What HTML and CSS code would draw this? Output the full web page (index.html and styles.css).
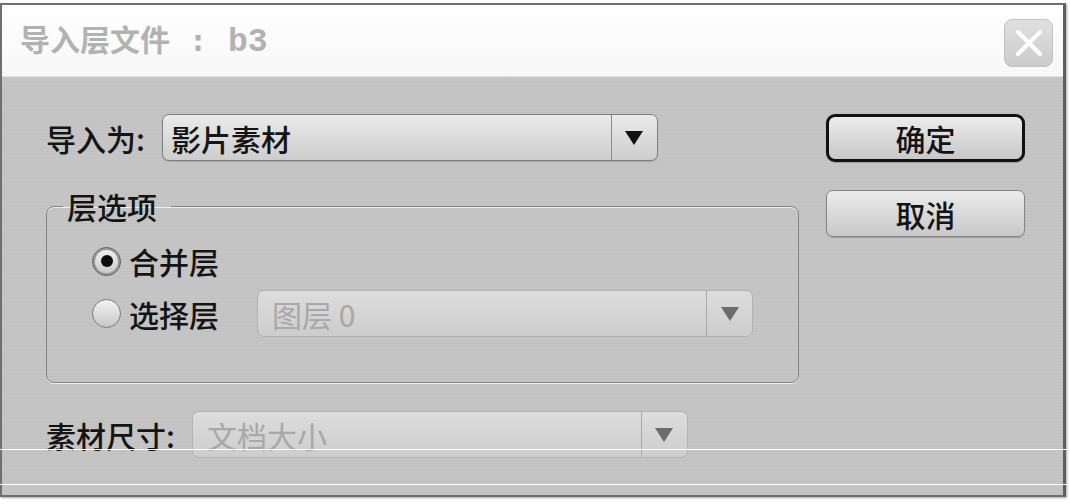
FILE: index.html
```html
<!DOCTYPE html>
<html lang="zh-CN">
<head>
  <meta charset="UTF-8" />
  <title>导入层文件</title>
  <link rel="stylesheet" href="styles.css">
</head>
<body>
  <div class="window">
    <div class="titlebar">
      <span class="title">导入层文件<span class="title-colon">:</span><span class="title-name">b3</span></span>
      <button class="close" title="关闭">
        <svg width="30" height="30" viewBox="0 0 30 30">
          <path d="M4 4 L26 26 M26 4 L4 26" stroke="#fff" stroke-width="4" stroke-linecap="round"/>
        </svg>
      </button>
    </div>

    <div class="content">
      <div class="form">
        <div class="field">
          <label>导入为:</label>
          <div class="select">
            <span class="select-value">影片素材</span>
            <span class="select-arrow">
              <svg width="20" height="16" viewBox="0 0 20 16"><polygon points="1,1 19,1 10,15" /></svg>
            </span>
          </div>
        </div>

        <fieldset class="group">
          <legend>层选项</legend>
          <div class="radio-row">
            <span class="radio checked"></span>
            <span class="radio-label">合并层</span>
          </div>
          <div class="radio-row second">
            <span class="radio"></span>
            <span class="radio-label">选择层</span>
            <div class="select disabled">
              <span class="select-value">图层 0</span>
              <span class="select-arrow">
                <svg width="20" height="16" viewBox="0 0 20 16"><polygon points="1,1 19,1 10,15" /></svg>
              </span>
            </div>
          </div>
        </fieldset>

        <div class="field last">
          <label>素材尺寸:</label>
          <div class="select disabled">
            <span class="select-value">文档大小</span>
            <span class="select-arrow">
              <svg width="20" height="16" viewBox="0 0 20 16"><polygon points="1,1 19,1 10,15" /></svg>
            </span>
          </div>
        </div>
      </div>

      <div class="actions">
        <button class="btn default">确定</button>
        <button class="btn">取消</button>
      </div>
    </div>
  </div>

  <!-- scan artifacts from the original picture -->
  <div class="scan-line one"></div>
  <div class="scan-line two"></div>
</body>
</html>
```

FILE: styles.css
```css
* {
  margin: 0;
  padding: 0;
  box-sizing: border-box;
  font-family: "Noto Sans CJK SC", "Noto Sans", sans-serif;
}
body {
  background: #fff;
  padding-top: 3px;
  position: relative;
  width: 1070px;
  height: 504px;
  overflow: hidden;
}
.window {
  width: 1066px;
  height: 494px;
  border: 2px solid #6f6f6f;
  border-right: 3px solid #5f5f5f;
  background: repeating-linear-gradient(to bottom, #c5c5c5 0, #c5c5c5 2px, #c1c1c1 2px, #c1c1c1 3px);
  display: flex;
  flex-direction: column;
  box-shadow: 1px 1px 2px rgba(0, 0, 0, 0.35);
}
.titlebar {
  height: 72px;
  background: linear-gradient(#ffffff, #f7f7f7);
  border-bottom: 1px solid #e4e4e4;
  display: flex;
  align-items: center;
  justify-content: space-between;
  padding: 0 10px 0 18px;
}
.title {
  font-size: 30px;
  font-weight: bold;
  color: #b2b2b2;
  line-height: 1;
  display: flex;
  align-items: baseline;
}
.title-colon {
  font-family: "DejaVu Sans Mono", monospace;
  margin-left: 19px;
}
.title-name {
  font-family: "Liberation Mono", monospace;
  font-size: 33px;
  font-weight: bold;
  margin-left: 21px;
}
.close {
  width: 49px;
  height: 48px;
  border-radius: 8px;
  border: 1px solid #c2c2c2;
  background: linear-gradient(#e0e0e0, #cbcbcb);
  display: flex;
  align-items: center;
  justify-content: center;
  margin-top: 4px;
}
.content {
  display: flex;
  gap: 27px;
  padding: 37px 0 0 44px;
}
.form {
  width: 753px;
}
.field {
  display: flex;
  align-items: center;
  gap: 17px;
  height: 47px;
}
.field.last {
  margin-top: 28px;
}
label,
.select-value,
.radio-label,
legend,
.btn {
  font-size: 30px;
  line-height: 36px;
  font-weight: 500;
  color: #141414;
}
.select {
  width: 496px;
  height: 47px;
  border: 1px solid #7e7e7e;
  border-radius: 7px;
  background: linear-gradient(#ebebeb, #cdcdcd);
  display: flex;
  box-shadow: 0 1px 1px rgba(0, 0, 0, 0.15);
}
.select-value {
  flex: 1;
  display: flex;
  align-items: center;
  padding-left: 8px;
}
.select-arrow {
  width: 46px;
  border-left: 1px solid #8a8a8a;
  display: flex;
  align-items: center;
  justify-content: center;
}
.select-arrow svg {
  fill: #111;
}
.select.disabled {
  border-color: #b2b2b2;
  background: linear-gradient(#dddddd, #cdcdcd);
  box-shadow: none;
}
.select.disabled .select-value {
  color: #a8a8a8;
  font-weight: normal;
  padding-left: 14px;
}
.select.disabled .select-arrow {
  border-left-color: #a9a9a9;
}
.select.disabled .select-arrow svg {
  fill: #6c6c6c;
}
.group {
  margin-top: 29px;
  width: 753px;
  border: 1px solid #858585;
  border-radius: 8px;
  padding: 21px 0 45px 45px;
  box-shadow: 0 1px 0 #eeeeee, inset 0 1px 0 #eeeeee;
}
.group legend {
  line-height: 32px;
  padding: 0 14px 0 4px;
  margin-left: -29px;
}
.radio-row {
  display: flex;
  align-items: center;
  gap: 8px;
  height: 36px;
}
.radio-row.second {
  height: 47px;
  margin-top: 11px;
}
.radio-row.second .select {
  margin-left: 30px;
}
.radio {
  width: 29px;
  height: 29px;
  border-radius: 50%;
  border: 1px solid #7c7c7c;
  background: linear-gradient(#f4f4f4, #c6c6c6);
  display: flex;
  align-items: center;
  justify-content: center;
}
.radio.checked {
  border-color: #555;
  box-shadow: inset 0 0 0 2px #9a9a9a;
}
.radio.checked::after {
  content: "";
  width: 12px;
  height: 12px;
  border-radius: 50%;
  background: #0c0c0c;
}
.actions {
  width: 199px;
  display: flex;
  flex-direction: column;
  gap: 28px;
}
.btn {
  height: 47px;
  border: 1px solid #858585;
  border-radius: 7px;
  background: linear-gradient(#ececec, #c8c8c8);
  box-shadow: 0 1px 1px rgba(0, 0, 0, 0.2);
}
.btn.default {
  height: 48px;
  border: 3px solid #111;
  border-radius: 9px;
}
.scan-line {
  position: absolute;
  left: 0;
  width: 1070px;
  height: 1px;
  background: #fff;
}
.scan-line.one {
  top: 449px;
}
.scan-line.two {
  top: 484px;
}
```
